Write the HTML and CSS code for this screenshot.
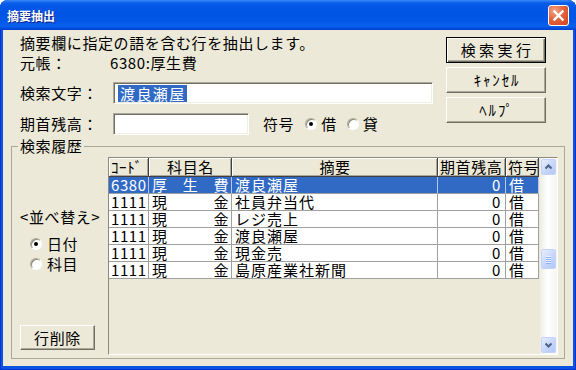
FILE: index.html
```html
<!DOCTYPE html>
<html lang="ja">
<head>
<meta charset="utf-8">
<title>摘要抽出</title>
<link rel="stylesheet" href="styles.css">
</head>
<body>
<div class="window">
  <div class="titlebar">
    <span class="title">摘要抽出</span>
    <span class="close"><svg viewBox="0 0 21 21" width="21" height="21"><path d="M6.5 6.5 L14.5 14.5 M14.5 6.5 L6.5 14.5" stroke="#fff" stroke-width="2.4" stroke-linecap="square"/></svg></span>
  </div>
  <div class="client">
    <div class="top">
      <div class="form">
        <div class="line">摘要欄に指定の語を含む行を抽出します。</div>
        <div class="line"><span class="lbl lbl-short">元帳：</span><span>6380:厚生費</span></div>
        <div class="row"><span class="lbl">検索文字：</span><span class="input wide"><span class="selected">渡良瀬屋</span></span></div>
        <div class="row"><span class="lbl">期首残高：</span><span class="input narrow"></span><span class="sign">符号</span><span class="radio on r1"></span><span class="rlabel">借</span><span class="radio r2"></span><span class="rlabel">貸</span></div>
      </div>
      <div class="buttons">
        <div class="btn default wide-text">検索実行</div>
        <div class="btn hw">ｷｬﾝｾﾙ</div>
        <div class="btn hw">ﾍﾙﾌﾟ</div>
      </div>
    </div>
    <fieldset class="group">
      <legend>検索履歴</legend>
      <div class="gbody">
        <div class="side">
          <div class="sort">&lt;並べ替え&gt;</div>
          <div class="opt first"><span class="radio on"></span><span class="olabel">日付</span></div>
          <div class="opt"><span class="radio"></span><span class="olabel">科目</span></div>
          <div class="btn del">行削除</div>
        </div>
        <div class="list">
          <div class="grid">
            <div class="hd">ｺｰﾄﾞ</div><div class="hd c">科目名</div><div class="hd c">摘要</div><div class="hd">期首残高</div><div class="hd">符号</div>

            <div class="cell s">6380</div><div class="cell name s"><span>厚</span><span>生</span><span>費</span></div><div class="cell memo s">渡良瀬屋</div><div class="cell num s">0</div><div class="cell mark s">借</div>

            <div class="cell">1111</div><div class="cell name"><span>現</span><span>金</span></div><div class="cell memo">社員弁当代</div><div class="cell num">0</div><div class="cell mark">借</div>

            <div class="cell">1111</div><div class="cell name"><span>現</span><span>金</span></div><div class="cell memo">レジ売上</div><div class="cell num">0</div><div class="cell mark">借</div>

            <div class="cell">1111</div><div class="cell name"><span>現</span><span>金</span></div><div class="cell memo">渡良瀬屋</div><div class="cell num">0</div><div class="cell mark">借</div>

            <div class="cell">1111</div><div class="cell name"><span>現</span><span>金</span></div><div class="cell memo">現金売</div><div class="cell num">0</div><div class="cell mark">借</div>

            <div class="cell">1111</div><div class="cell name"><span>現</span><span>金</span></div><div class="cell memo">島原産業社新聞</div><div class="cell num">0</div><div class="cell mark">借</div>
          </div>
          <div class="vscroll">
            <div class="sbb"><svg viewBox="0 0 13 14" width="13" height="14"><path d="M3.5 8.5 L6.5 5.5 L9.5 8.5" fill="none" stroke="#4D6185" stroke-width="2"/></svg></div>
            <div class="sbb thumb"><svg viewBox="0 0 13 18" width="13" height="18"><path d="M4 6.5h5M4 8.5h5M4 10.5h5M4 12.5h5" stroke="#EEF4FE" stroke-width="1"/><path d="M4 7.5h5M4 9.5h5M4 11.5h5M4 13.5h5" stroke="#8CB0F8" stroke-width="1"/></svg></div>
            <div class="sbb down"><svg viewBox="0 0 13 14" width="13" height="14"><path d="M3.5 5.5 L6.5 8.5 L9.5 5.5" fill="none" stroke="#4D6185" stroke-width="2"/></svg></div>
          </div>
        </div>
      </div>
    </fieldset>
  </div>
</div>
</body>
</html>
```

FILE: styles.css
```css
* { box-sizing: border-box; }
html, body { margin: 0; padding: 0; }
body {
  background: #ffffff;
  width: 576px;
  height: 370px;
  overflow: hidden;
  font-family: "Noto Sans CJK JP", "Noto Sans", sans-serif;
}
.window {
  width: 576px;
  height: 370px;
  display: flex;
  flex-direction: column;
  background: #0A55E0;
  border-radius: 8px 8px 0 0;
  overflow: hidden;
  box-shadow: inset 1px 0 #0831D9, inset -1px 0 #0831D9, inset 0 -1px #0831D9;
}
.titlebar {
  height: 30px;
  flex: none;
  display: flex;
  align-items: center;
  justify-content: space-between;
  padding: 0 7px 0 7px;
  background: linear-gradient(to bottom, #3C8CF8 0px, #2A7AF5 1px, #0A5DE8 3px, #0356E6 8px, #0055E4 15px, #0358E8 22px, #0A61EE 26px, #0048D8 29px, #003FC8 30px);
}
.title {
  color: #ffffff;
  font-size: 12px;
  font-weight: bold;
  line-height: 14px;
  text-shadow: 1px 1px 0 #0F1E89;
  margin-top: 1px;
}
.close {
  width: 21px;
  height: 21px;
  margin-top: 1px;
  border: 1px solid #ffffff;
  border-radius: 3px;
  background: radial-gradient(circle at 30% 25%, #F3A589 0%, #E5633E 45%, #CF4421 100%);
  display: flex;
  align-items: center;
  justify-content: center;
}
.close svg { display: block; margin: -1px; }
.client {
  flex: 1;
  margin: 0 3px 4px 3px;
  background: #ECE9D8;
  display: flex;
  flex-direction: column;
  font-size: 15px;
  letter-spacing: 0.6px;
  color: #000000;
  line-height: 20px;
}
.top {
  height: 105px;
  flex: none;
  display: flex;
  padding: 3px 27px 0 17px;
}
.form { flex: 1; }
.line {
  height: 20px;
  line-height: 20px;
  display: flex;
  white-space: nowrap;
}
.row {
  height: 22px;
  margin-top: 9px;
  display: flex;
  align-items: center;
  white-space: nowrap;
}
.lbl { width: 93px; flex: none; }
.lbl-short { width: 90px; }
.input {
  height: 22px;
  background: #ffffff;
  border: 1px solid;
  border-color: #ACA899 #ffffff #ffffff #ACA899;
  box-shadow: inset 1px 1px #716F64, inset -1px -1px #F1EFE2;
  padding: 0 3px 0 4px;
  display: flex;
  align-items: center;
  flex: none;
}
.input.wide { width: 320px; }
.input.narrow { width: 136px; }
.selected {
  background: #316AC5;
  color: #ffffff;
  line-height: 17px;
  letter-spacing: 1.4px;
  padding: 0 1px 0 2px;
}
.sign { margin-left: 14px; }
.radio {
  width: 12px;
  height: 12px;
  flex: none;
  border-radius: 50%;
  background: #ffffff;
  border: 1px solid;
  border-color: #ACA899 #ffffff #ffffff #ACA899;
  box-shadow: inset 1px 1px #8C8A7E;
  display: flex;
  align-items: center;
  justify-content: center;
}
.radio.on::after {
  content: "";
  width: 4px;
  height: 4px;
  border-radius: 50%;
  background: #000000;
}
.r1 { margin-left: 11px; }
.r2 { margin-left: 10px; }
.rlabel { margin-left: 4px; }
.buttons {
  width: 100px;
  flex: none;
  display: flex;
  flex-direction: column;
  gap: 4px;
  margin-top: 4px;
}
.btn {
  height: 26px;
  background: #ECE9D8;
  border: 1px solid;
  border-color: #ffffff #716F64 #716F64 #ffffff;
  box-shadow: inset -1px -1px #ACA899;
  display: flex;
  align-items: center;
  justify-content: center;
  white-space: nowrap;
}
.btn.default {
  border: 1px solid #000000;
  box-shadow: inset 1px 1px #ffffff, inset -1px -1px #716F64, inset -2px -2px #ACA899;
}
.wide-text { letter-spacing: 3.4px; padding-left: 3px; }
.hw { letter-spacing: 1.8px; padding-left: 2px; }
.group {
  flex: none;
  margin: 2px 8px 7px 8px;
  padding: 2px 6px 3px 6px;
  border: 1px solid #ACA899;
  min-width: 0;
}
.group legend {
  padding: 0 2px;
  line-height: 18px;
  margin: 0;
}
.gbody {
  height: 198px;
  display: flex;
}
.side {
  width: 90px;
  flex: none;
  display: flex;
  flex-direction: column;
  padding-left: 2px;
}
.sort {
  margin-top: 51px;
  line-height: 18px;
}
.opt {
  height: 18px;
  display: flex;
  align-items: center;
  margin-top: 2px;
  padding-left: 10px;
}
.opt.first { margin-top: 9px; }
.olabel { margin-left: 5px; }
.btn.del {
  width: 75px;
  height: 25px;
  margin-top: auto;
  margin-bottom: 5px;
}
.list {
  flex: 1;
  display: flex;
  border: 1px solid;
  border-color: #8C8A7E #ffffff #ffffff #8C8A7E;
  background: #ECE9D8;
}
.grid {
  width: 431px;
  flex: none;
  display: grid;
  grid-template-columns: 40px 83px 206px 68px 33px;
  grid-template-rows: 19px;
  grid-auto-rows: 17px;
  align-content: start;
  line-height: 16px;
}
.hd {
  background: #ECE9D8;
  border-right: 1px solid #404040;
  border-bottom: 1px solid #404040;
  box-shadow: inset 1px 1px #ffffff, inset -1px -1px #ACA899;
  padding: 0 1px 0 2px;
  display: flex;
  align-items: center;
  white-space: nowrap;
}
.hd.c { justify-content: center; }
.cell {
  background: #ffffff;
  border-right: 1px solid #A0A0A0;
  border-bottom: 1px solid #A0A0A0;
  padding: 0 1px 0 2px;
  display: flex;
  align-items: center;
  white-space: nowrap;
}
.cell.name { justify-content: space-between; padding: 0 2px 0 3px; }
.cell.memo { padding-left: 3px; letter-spacing: 1px; }
.cell.num { justify-content: flex-end; padding-right: 4px; }
.cell.mark { padding-left: 3px; }
.cell.s {
  background: #316AC5;
  color: #ffffff;
  border-right-color: #B8C8E8;
}
.vscroll {
  width: 17px;
  flex: none;
  display: flex;
  flex-direction: column;
  align-items: center;
  background: linear-gradient(to right, #EEEDE5, #FFFFFF 45%, #F5F4EF);
}
.sbb {
  width: 15px;
  height: 16px;
  margin-top: 1px;
  border: 1px solid #C3D3FD;
  border-radius: 2px;
  background: linear-gradient(135deg, #E6EEFE 0%, #C9D8FC 50%, #B4C8F6 100%);
  display: flex;
  align-items: center;
  justify-content: center;
}
.sbb svg { display: block; }
.sbb.thumb { height: 20px; margin-top: 74px; }
.sbb.down { margin-top: auto; margin-bottom: 1px; }
```
